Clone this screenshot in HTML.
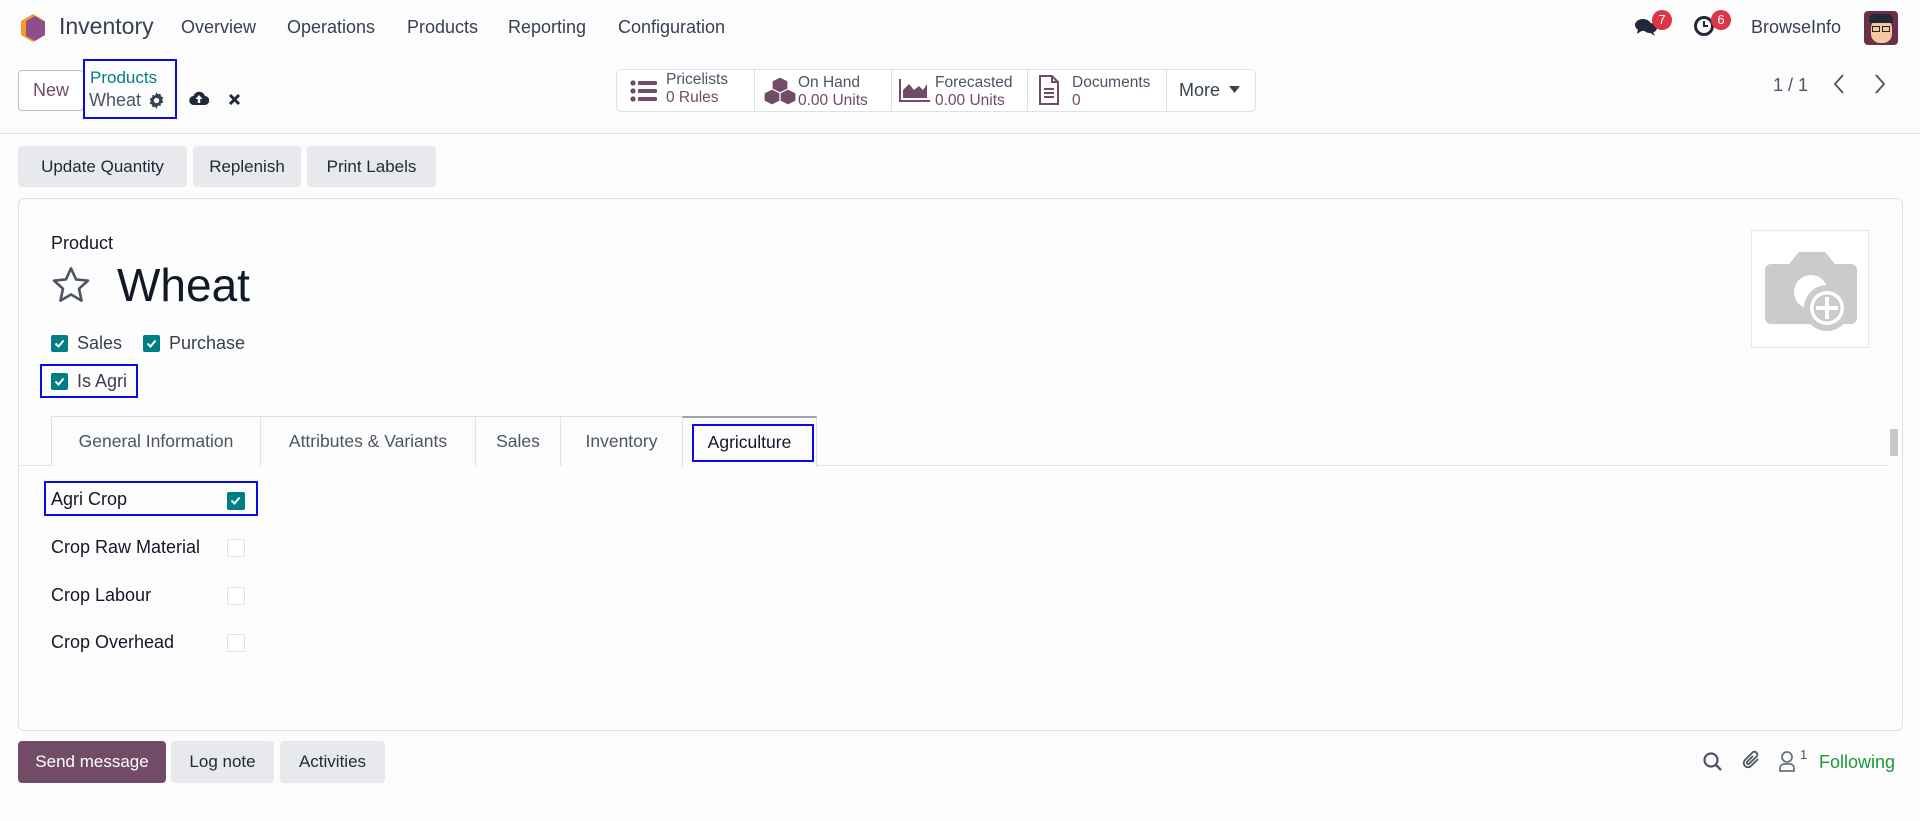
<!DOCTYPE html>
<html><head><meta charset="utf-8">
<style>
*{box-sizing:border-box;margin:0;padding:0}
body{width:1920px;height:821px;overflow:hidden;background:#fcfcfd;font-family:"Liberation Sans",sans-serif;color:#374151;position:relative;font-size:18px}
.a{position:absolute;white-space:nowrap}
.btn{position:absolute;background:#e7e9ed;border-radius:4px;color:#1f2937;font-size:17px;display:flex;align-items:center;justify-content:center}
.cb{position:absolute;width:17px;height:17px;background:#017e84;border-radius:2px}
.cb svg{position:absolute;left:3px;top:3px}
.ucb{position:absolute;width:18px;height:18px;border:1px solid #dee2e6;border-radius:2px;background:#fff}
.blue{position:absolute;border:2.5px solid #0a0ae6}
.tab{position:absolute;top:416px;height:50px;border:1px solid #dee2e6;border-bottom:none;font-size:17.5px;color:#4b5563;display:flex;align-items:center;justify-content:center;background:#fcfcfd}
.stat{position:absolute;top:69px;height:42px;font-size:15.5px;color:#4b5563;line-height:18px}
.stat b{font-weight:normal;color:#714b67}
</style></head><body>
<svg class="a" style="left:20px;top:14px" width="26" height="28" viewBox="0 0 26 28"><polygon points="13,0 25,7 25,21 13,28 1,21 1,7" fill="#f39c2b"/><polygon points="15,2 25,8 25,21 15,27 6,22 6,7" fill="#8f4d8a"/></svg>
<div class="a" style="left:59px;top:13px;font-size:23px;color:#374151">Inventory</div>
<div class="a" style="left:181px;top:17px">Overview</div>
<div class="a" style="left:287px;top:17px">Operations</div>
<div class="a" style="left:407px;top:17px">Products</div>
<div class="a" style="left:508px;top:17px">Reporting</div>
<div class="a" style="left:618px;top:17px">Configuration</div>
<svg class="a" style="left:1634px;top:17px" width="24" height="20" viewBox="0 0 24 20"><ellipse cx="9" cy="8" rx="8" ry="6" fill="#1f2937"/><path d="M4 12 L3 17 L9 13Z" fill="#1f2937"/><ellipse cx="16" cy="11" rx="7" ry="5" fill="#1f2937"/><path d="M19 15 L21 19 L15 15Z" fill="#1f2937"/></svg>
<div class="a" style="left:1652px;top:10px;width:20px;height:20px;border-radius:10px;background:#dc3545;color:#fff;font-size:13px;text-align:center;line-height:20px">7</div>
<svg class="a" style="left:1693px;top:15px" width="22" height="22" viewBox="0 0 22 22"><circle cx="11" cy="11" r="8.5" fill="none" stroke="#1f2937" stroke-width="3"/><path d="M11 6v5h4" fill="none" stroke="#1f2937" stroke-width="2"/></svg>
<div class="a" style="left:1711px;top:10px;width:20px;height:20px;border-radius:10px;background:#dc3545;color:#fff;font-size:13px;text-align:center;line-height:20px">6</div>
<div class="a" style="left:1751px;top:17px;color:#374151">BrowseInfo</div>
<div class="a" style="left:1864px;top:11px;width:34px;height:34px;border-radius:4px;background:#6b2f4a;overflow:hidden"><div style="position:absolute;left:7px;top:8px;width:21px;height:24px;border-radius:9px;background:#f4c7a1"></div><div style="position:absolute;left:5px;top:3px;width:24px;height:9px;border-radius:5px 5px 2px 2px;background:#1f2937"></div><div style="position:absolute;left:8px;top:15px;width:8px;height:6px;border:1.5px solid #222"></div><div style="position:absolute;left:18px;top:15px;width:8px;height:6px;border:1.5px solid #222"></div></div>

<div class="a" style="left:18px;top:70px;width:66px;height:41px;border:1px solid #c9b8c5;border-radius:4px;color:#714b67;font-size:18px;text-align:center;line-height:39px;background:#fff">New</div>
<div class="a" style="left:90px;top:68px;font-size:17px;color:#017e84">Products</div>
<div class="a" style="left:89px;top:90px;font-size:18px;color:#4b5563">Wheat</div>
<svg class="a" style="left:148px;top:92px" width="17" height="17" viewBox="0 0 16 16"><path d="M8 0l1.3 2.2 2.5-.7.3 2.6 2.4 1-1.2 2.3 1.2 2.3-2.4 1-.3 2.6-2.5-.7L8 16l-1.3-2.2-2.5.7-.3-2.6-2.4-1L2.7 8.6 1.5 6.3l2.4-1 .3-2.6 2.5.7z" fill="#374151"/><circle cx="8" cy="8" r="2.5" fill="#fff"/></svg>
<div class="blue" style="left:83px;top:59px;width:94px;height:60px"></div>
<svg class="a" style="left:189px;top:90px" width="20" height="16" viewBox="0 0 20 16"><path d="M5 15a4.5 4.5 0 0 1-.5-9A6 6 0 0 1 16 6a4.5 4.5 0 0 1-.5 9z" fill="#1f2937"/><path d="M10 5l-3.5 4h2.3v4h2.4V9h2.3z" fill="#fff"/></svg>
<svg class="a" style="left:228px;top:93px" width="13" height="13" viewBox="0 0 13 13"><path d="M2 2l9 9M11 2l-9 9" stroke="#1f2937" stroke-width="3"/></svg>

<div class="a" style="left:616px;top:69px;width:640px;height:43px;border:1px solid #dee2e6;border-radius:6px;background:#fff"></div>
<div class="a" style="left:754px;top:70px;width:1px;height:41px;background:#dee2e6"></div>
<div class="a" style="left:891px;top:70px;width:1px;height:41px;background:#dee2e6"></div>
<div class="a" style="left:1027px;top:70px;width:1px;height:41px;background:#dee2e6"></div>
<div class="a" style="left:1166px;top:70px;width:1px;height:41px;background:#dee2e6"></div>
<svg class="a" style="left:630px;top:80px" width="28" height="22" viewBox="0 0 28 22"><g fill="#714b67"><circle cx="3" cy="3" r="2.6"/><circle cx="3" cy="11" r="2.6"/><circle cx="3" cy="19" r="2.6"/><rect x="8" y="1" width="19" height="4" rx="1"/><rect x="8" y="9" width="19" height="4" rx="1"/><rect x="8" y="17" width="19" height="4" rx="1"/></g></svg>
<div class="stat" style="left:666px;top:71px">Pricelists<br><b>0 Rules</b></div>
<svg class="a" style="left:762px;top:76px" width="36" height="30" viewBox="0 0 36 30"><g fill="#714b67" stroke="#fff" stroke-width="1.2"><path d="M18 1l8 4v8l-8 4-8-4V5z"/><path d="M10 13l8 4v8l-8 4-8-4v-8z"/><path d="M26 13l8 4v8l-8 4-8-4v-8z"/></g></svg>
<div class="stat" style="left:798px;top:74px">On Hand<br><b>0.00 Units</b></div>
<svg class="a" style="left:899px;top:78px" width="32" height="24" viewBox="0 0 32 24"><path d="M1 1v22h30" fill="none" stroke="#714b67" stroke-width="2"/><path d="M4 20V12l6-6 5 6 5-4 4 4 4-6v14z" fill="#714b67"/></svg>
<div class="stat" style="left:935px;top:74px">Forecasted<br><b>0.00 Units</b></div>
<svg class="a" style="left:1038px;top:75px" width="22" height="30" viewBox="0 0 22 30"><path d="M2 1h12l6 6v22H2z" fill="none" stroke="#714b67" stroke-width="2"/><path d="M14 1v6h6M6 14h10M6 18h10M6 22h10" fill="none" stroke="#714b67" stroke-width="2"/></svg>
<div class="stat" style="left:1072px;top:74px">Documents<br><b>0</b></div>
<div class="a" style="left:1179px;top:80px;font-size:18px;color:#374151">More</div>
<svg class="a" style="left:1229px;top:86px" width="11" height="7" viewBox="0 0 11 7"><path d="M0 0h11L5.5 7z" fill="#374151"/></svg>

<div class="a" style="left:1773px;top:75px;font-size:18px;color:#4b5563">1 / 1</div>
<svg class="a" style="left:1833px;top:74px" width="12" height="20" viewBox="0 0 12 20"><path d="M10 1L2 10l8 9" fill="none" stroke="#4b5563" stroke-width="1.8"/></svg>
<svg class="a" style="left:1874px;top:74px" width="12" height="20" viewBox="0 0 12 20"><path d="M2 1l8 9-8 9" fill="none" stroke="#4b5563" stroke-width="1.8"/></svg>
<div class="a" style="left:0;top:133px;width:1920px;height:1px;background:#e2e4e8"></div>

<div class="btn" style="left:18px;top:146px;width:169px;height:41px">Update Quantity</div>
<div class="btn" style="left:193px;top:146px;width:108px;height:41px">Replenish</div>
<div class="btn" style="left:307px;top:146px;width:129px;height:41px">Print Labels</div>

<div class="a" style="left:18px;top:198px;width:1885px;height:533px;border:1px solid #dee2e6;border-radius:6px;background:#fdfdfd"></div>
<div class="a" style="left:51px;top:233px;font-size:18px;color:#111827">Product</div>
<svg class="a" style="left:50px;top:264px" width="42" height="42" viewBox="0 0 24 24"><path d="M12 2.5l2.9 6.3 6.8.7-5.1 4.6 1.4 6.8L12 17.4l-6 3.5 1.4-6.8-5.1-4.6 6.8-.7z" fill="none" stroke="#4b5563" stroke-width="1.5" stroke-linejoin="round"/></svg>
<div class="a" style="left:117px;top:258px;font-size:46px;color:#111827">Wheat</div>
<div class="a" style="left:1751px;top:230px;width:118px;height:118px;border:1px solid #e5e7eb;background:#fff"></div>
<svg class="a" style="left:1763px;top:250px" width="96" height="84" viewBox="0 0 96 84"><path d="M8 14h18l10-12h26l10 12h16a6 6 0 0 1 6 6v48a6 6 0 0 1-6 6H8a6 6 0 0 1-6-6V20a6 6 0 0 1 6-6z" fill="#cbcbcb"/><circle cx="48" cy="42" r="17" fill="#fff"/><circle cx="64" cy="58" r="23" fill="#cbcbcb"/><circle cx="64" cy="58" r="17" fill="#fff"/><circle cx="64" cy="58" r="13.5" fill="#cbcbcb"/><path d="M64 47v22M53 58h22" stroke="#fff" stroke-width="4"/></svg>

<div class="cb" style="left:51px;top:335px"><svg width="11" height="11" viewBox="0 0 11 11"><path d="M1.5 5.5l3 3 5-6" fill="none" stroke="#fff" stroke-width="2"/></svg></div>
<div class="a" style="left:77px;top:333px">Sales</div>
<div class="cb" style="left:143px;top:335px"><svg width="11" height="11" viewBox="0 0 11 11"><path d="M1.5 5.5l3 3 5-6" fill="none" stroke="#fff" stroke-width="2"/></svg></div>
<div class="a" style="left:169px;top:333px">Purchase</div>
<div class="cb" style="left:51px;top:373px"><svg width="11" height="11" viewBox="0 0 11 11"><path d="M1.5 5.5l3 3 5-6" fill="none" stroke="#fff" stroke-width="2"/></svg></div>
<div class="a" style="left:77px;top:371px">Is Agri</div>
<div class="blue" style="left:40px;top:364px;width:98px;height:34px"></div>

<div class="a" style="left:18px;top:465px;width:1870px;height:1px;background:#dee2e6"></div>
<div class="tab" style="left:51px;width:210px">General Information</div>
<div class="tab" style="left:260px;width:216px">Attributes &amp; Variants</div>
<div class="tab" style="left:475px;width:86px">Sales</div>
<div class="tab" style="left:560px;width:123px">Inventory</div>
<div class="tab" style="left:682px;width:135px;border-top:2px solid #9ca3af;height:51px;color:#111827">Agriculture</div>
<div class="blue" style="left:692px;top:424px;width:122px;height:38px"></div>
<div class="a" style="left:1889px;top:422px;width:11px;height:43px"><div style="position:absolute;top:7px;left:1px;width:8px;height:27px;background:#c9c9c9"></div></div>

<div class="a" style="left:51px;top:489px;color:#111827">Agri Crop</div>
<div class="cb" style="left:227px;top:492px;width:18px;height:18px"><svg width="11" height="11" viewBox="0 0 11 11"><path d="M1.5 5.5l3 3 5-6" fill="none" stroke="#fff" stroke-width="2"/></svg></div>
<div class="blue" style="left:44px;top:481px;width:214px;height:35px"></div>
<div class="a" style="left:51px;top:537px;color:#111827">Crop Raw Material</div>
<div class="ucb" style="left:227px;top:539px"></div>
<div class="a" style="left:51px;top:585px;color:#111827">Crop Labour</div>
<div class="ucb" style="left:227px;top:587px"></div>
<div class="a" style="left:51px;top:632px;color:#111827">Crop Overhead</div>
<div class="ucb" style="left:227px;top:634px"></div>

<div class="btn" style="left:18px;top:741px;width:148px;height:42px;background:#714b67;color:#fff">Send message</div>
<div class="btn" style="left:171px;top:741px;width:103px;height:42px">Log note</div>
<div class="btn" style="left:280px;top:741px;width:105px;height:42px">Activities</div>
<svg class="a" style="left:1702px;top:751px" width="22" height="22" viewBox="0 0 22 22"><circle cx="9" cy="9" r="6.5" fill="none" stroke="#4b5563" stroke-width="2.2"/><path d="M14 14l5 5" stroke="#4b5563" stroke-width="2.4"/></svg>
<svg class="a" style="left:1741px;top:749px" width="22" height="24" viewBox="0 0 22 24"><path d="M17 10l-7 7a4 4 0 0 1-6-6l8-8a3 3 0 0 1 4 4l-8 8a1.5 1.5 0 0 1-2-2l6-6" fill="none" stroke="#4b5563" stroke-width="1.8"/></svg>
<svg class="a" style="left:1778px;top:750px" width="18" height="22" viewBox="0 0 18 22"><circle cx="9" cy="7" r="5" fill="none" stroke="#6b7280" stroke-width="1.8"/><path d="M2 21v-3a4 4 0 0 1 4-4h6a4 4 0 0 1 4 4v3z" fill="none" stroke="#6b7280" stroke-width="1.8"/></svg>
<div class="a" style="left:1800px;top:747px;font-size:13px;color:#4b5563">1</div>
<div class="a" style="left:1819px;top:752px;color:#1a9a3a">Following</div>
</body></html>
